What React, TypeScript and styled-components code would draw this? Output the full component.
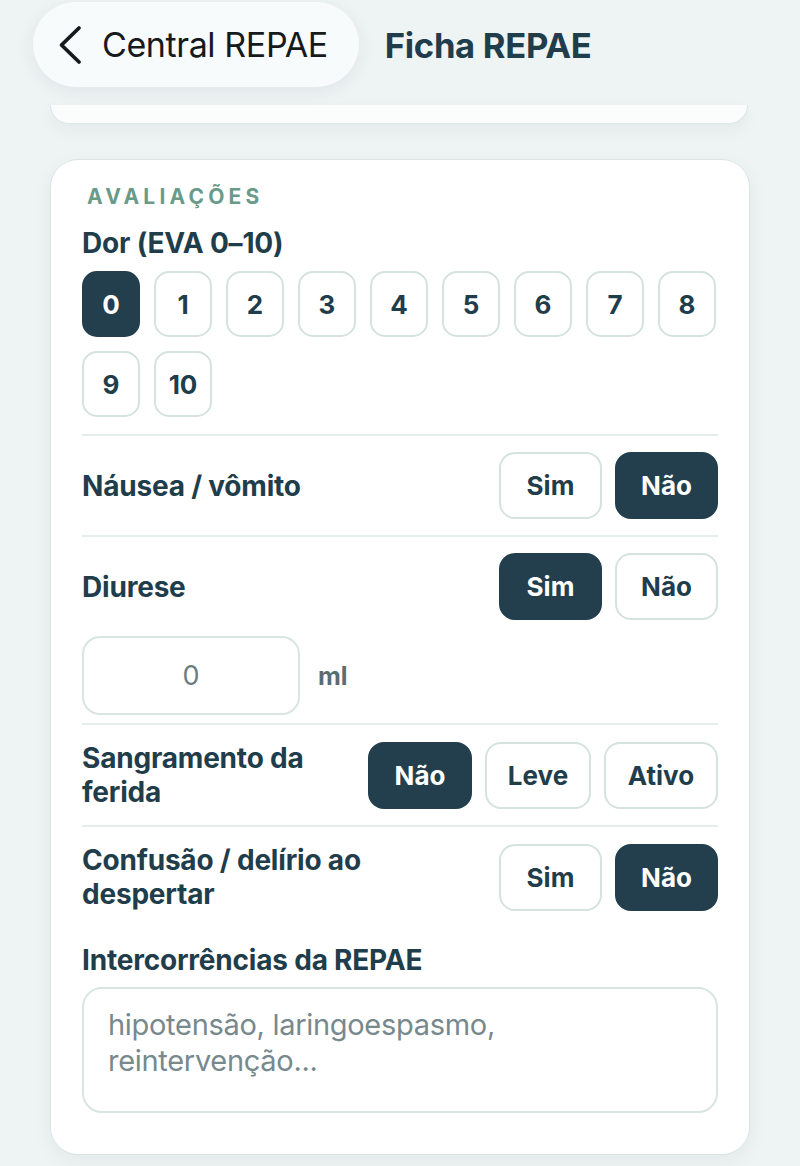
import React, { useState } from "react";
import styled, { createGlobalStyle } from "styled-components";

const GlobalStyle = createGlobalStyle`
  html, body {
    margin: 0;
    padding: 0;
    background: #eef3f3;
  }
  body {
    font-family: Inter, "Noto Sans", "Liberation Sans", sans-serif;
    color: #1f3d4a;
    -webkit-font-smoothing: antialiased;
  }
  * { box-sizing: border-box; }
`;

const Screen = styled.div`
  width: 800px;
  min-height: 1166px;
  background: #eef3f3;
  overflow: hidden;
`;

const TopBar = styled.header`
  display: flex;
  align-items: center;
  gap: 26px;
  padding: 0 0 0 33px;
  height: 89px;
  position: relative;
  z-index: 2;
`;

const BackPill = styled.button`
  display: flex;
  align-items: center;
  gap: 20px;
  height: 85px;
  padding: 0 31px 0 25px;
  border: none;
  border-radius: 43px;
  background: #f8fbfb;
  box-shadow: 0 4px 18px rgba(40, 70, 80, 0.07);
  font-family: inherit;
  font-size: 34px;
  font-weight: 400;
  color: #161a1c;
  letter-spacing: -0.4px;
`;

const Title = styled.h1`
  margin: 0;
  font-size: 34.6px;
  font-weight: 700;
  color: #1f3d4a;
  letter-spacing: -0.3px;
`;

const PrevCardTail = styled.div`
  margin: 16px 52px 0 50px;
  height: 19px;
  background: #fbfdfd;
  border: 1.5px solid #dce6e4;
  border-top: none;
  border-radius: 0 0 26px 26px;
  box-shadow: 0 6px 16px rgba(40, 70, 80, 0.05);
`;

const Card = styled.section`
  margin: 35px 50px 0 50px;
  background: #ffffff;
  border: 1.5px solid #dae5e2;
  border-radius: 28px;
  padding: 25px 31px 41px 31px;
  box-shadow: 0 6px 20px rgba(40, 70, 80, 0.05);
`;

const SectionTitle = styled.div`
  font-size: 21px;
  line-height: 24px;
  font-weight: 700;
  letter-spacing: 4.2px;
  color: #6a9b88;
  padding-left: 5px;
  margin-bottom: 17px;
`;

const FieldLabel = styled.div`
  font-size: 28px;
  font-weight: 700;
  color: #1f3d4a;
  line-height: 34px;
  letter-spacing: -0.2px;
`;

const ScaleGrid = styled.div`
  display: flex;
  flex-wrap: wrap;
  gap: 14px;
  margin-top: 11px;
  padding-bottom: 17px;
`;

const Chip = styled.button<{ $active?: boolean }>`
  min-width: 58px;
  height: 66px;
  padding: 0 10px;
  border-radius: 15px;
  border: 2.5px solid ${(p) => (p.$active ? "#233f4d" : "#d5e3de")};
  background: ${(p) => (p.$active ? "#233f4d" : "#ffffff")};
  color: ${(p) => (p.$active ? "#ffffff" : "#1f3d4a")};
  font-family: inherit;
  font-size: 26px;
  font-weight: 700;
  display: flex;
  align-items: center;
  justify-content: center;
`;

const OptionButton = styled(Chip)<{ $w: number }>`
  width: ${(p) => p.$w}px;
  height: 67px;
  border-radius: 16px;
  font-size: 26px;
  font-weight: 700;
`;

const Row = styled.div<{ $divider?: boolean }>`
  display: flex;
  align-items: center;
  justify-content: space-between;
  gap: 16px;
  padding: 16px 0;
  border-top: ${(p) => (p.$divider ? "2px solid #e6eeec" : "none")};
`;

const RowLabel = styled(FieldLabel)`
  max-width: 280px;
`;

const Options = styled.div`
  display: flex;
  gap: 13px;
`;

const UnitRow = styled.div`
  display: flex;
  align-items: center;
  gap: 18px;
  padding-bottom: 8px;
`;

const NumberBox = styled.div`
  width: 218px;
  height: 79px;
  border: 2px solid #d9e5e1;
  border-radius: 18px;
  display: flex;
  align-items: center;
  justify-content: center;
  font-size: 27px;
  color: #6b7d82;
`;

const Unit = styled.span`
  font-size: 25px;
  font-weight: 700;
  color: #5c6c70;
`;

const NotesLabel = styled(FieldLabel)`
  margin-top: 16px;
  margin-bottom: 10px;
`;

const Notes = styled.div`
  height: 126px;
  border: 2px solid #d9e5e1;
  border-radius: 20px;
  padding: 18px 24px;
  font-size: 29px;
  line-height: 36px;
  color: #77898d;
  font-weight: 400;
  letter-spacing: -0.3px;
`;

const Chevron = () => (
  <svg width="24" height="40" viewBox="0 0 24 40" fill="none">
    <path d="M21 3 L3.5 20 L21 37" stroke="#161a1c" strokeWidth="3.8" strokeLinecap="round" strokeLinejoin="round" />
  </svg>
);

type Opt = { label: string; w: number };

function Choice({ options, value }: { options: Opt[]; value: string }) {
  const [sel, setSel] = useState(value);
  return (
    <Options>
      {options.map((o) => (
        <OptionButton key={o.label} $w={o.w} $active={sel === o.label} onClick={() => setSel(o.label)}>
          {o.label}
        </OptionButton>
      ))}
    </Options>
  );
}

const simNao: Opt[] = [
  { label: "Sim", w: 103 },
  { label: "Não", w: 103 },
];

export default function App() {
  const [pain, setPain] = useState(0);
  return (
    <Screen>
      <GlobalStyle />
      <TopBar>
        <BackPill>
          <Chevron />
          Central REPAE
        </BackPill>
        <Title>Ficha REPAE</Title>
      </TopBar>
      <PrevCardTail />
      <Card>
        <SectionTitle>AVALIAÇÕES</SectionTitle>
        <FieldLabel>Dor (EVA 0–10)</FieldLabel>
        <ScaleGrid>
          {Array.from({ length: 11 }, (_, i) => (
            <Chip key={i} $active={pain === i} onClick={() => setPain(i)}>
              {i}
            </Chip>
          ))}
        </ScaleGrid>
        <Row $divider>
          <RowLabel>Náusea / vômito</RowLabel>
          <Choice options={simNao} value="Não" />
        </Row>
        <Row $divider>
          <RowLabel>Diurese</RowLabel>
          <Choice options={simNao} value="Sim" />
        </Row>
        <UnitRow>
          <NumberBox>0</NumberBox>
          <Unit>ml</Unit>
        </UnitRow>
        <Row $divider>
          <RowLabel>Sangramento da ferida</RowLabel>
          <Choice
            options={[
              { label: "Não", w: 104 },
              { label: "Leve", w: 106 },
              { label: "Ativo", w: 114 },
            ]}
            value="Não"
          />
        </Row>
        <Row $divider>
          <RowLabel>Confusão / delírio ao despertar</RowLabel>
          <Choice options={simNao} value="Não" />
        </Row>
        <NotesLabel>Intercorrências da REPAE</NotesLabel>
        <Notes>
          hipotensão, laringoespasmo,
          <br />
          reintervenção...
        </Notes>
      </Card>
    </Screen>
  );
}
